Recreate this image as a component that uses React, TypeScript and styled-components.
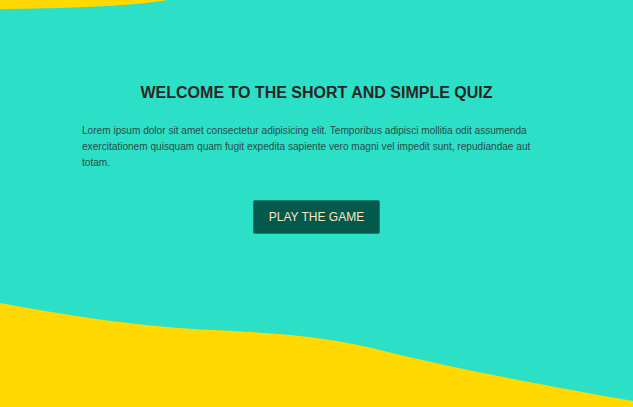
import React from "react";
import styled, { createGlobalStyle } from "styled-components";

const Global = createGlobalStyle`
  html, body { margin: 0; padding: 0; }
  body { font-family: "Liberation Sans", Arial, sans-serif; }
`;

const Page = styled.main`
  position: relative;
  height: 100vh;
  min-height: 407px;
  background: #2ce0c7;
  overflow: hidden;
`;

const Wave = styled.svg<{ $top?: boolean }>`
  position: absolute;
  left: 0;
  width: 100%;
  height: ${(p) => (p.$top ? "12px" : "110px")};
  ${(p) => (p.$top ? "top: 0;" : "bottom: 0;")}
  display: block;
`;

const Content = styled.section`
  position: relative;
  z-index: 1;
  width: 469px;
  margin: 0 auto;
  padding-top: 83px;
  display: flex;
  flex-direction: column;
  align-items: center;
`;

const Title = styled.h1`
  margin: 0;
  font-size: 16px;
  line-height: 20px;
  font-weight: 700;
  color: #2b2525;
  text-align: center;
`;

const Text = styled.p`
  margin: 20px 0 0;
  font-size: 10.1px;
  line-height: 16px;
  color: #2a4c48;
  align-self: stretch;
`;

const PlayButton = styled.button`
  margin-top: 29px;
  padding: 9px 15px;
  font-family: inherit;
  font-size: 12px;
  line-height: 14px;
  white-space: nowrap;
  color: #fbe7c0;
  background: #02594c;
  border: 1px solid #138070;
  border-radius: 2px;
  cursor: pointer;
`;

export default function App() {
  return (
    <>
      <Global />
      <Page>
        <Wave $top viewBox="0 0 633 12" preserveAspectRatio="none" aria-hidden>
          <path d="M0,0 L168,0 C145,4 100,8 0,9 Z" fill="#ffd900" />
        </Wave>
        <Wave viewBox="0 297 633 110" preserveAspectRatio="none" aria-hidden>
          <path
            d="M0,303 C60,314 130,326 213,330 C280,333 330,337 380,350 C460,370 560,388 633,401 L633,407 L0,407 Z"
            fill="#ffd900"
          />
        </Wave>
        <Content>
          <Title>WELCOME TO THE SHORT AND SIMPLE QUIZ</Title>
          <Text>
            Lorem ipsum dolor sit amet consectetur adipisicing elit. Temporibus adipisci mollitia odit assumenda
            exercitationem quisquam quam fugit expedita sapiente vero magni vel impedit sunt, repudiandae aut
            totam.
          </Text>
          <PlayButton>PLAY THE GAME</PlayButton>
        </Content>
      </Page>
    </>
  );
}
